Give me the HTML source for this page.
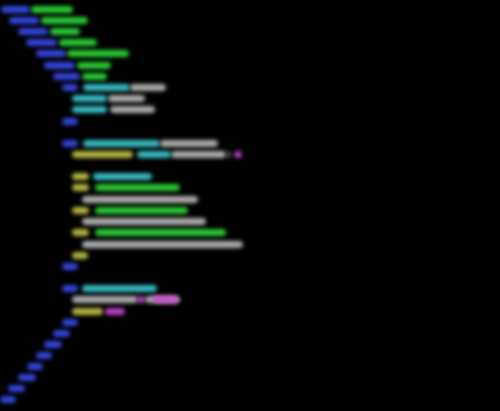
<!DOCTYPE html>
<html><head><style>
html,body{margin:0;padding:0;background:#000;width:500px;height:411px;overflow:hidden;position:relative}
i{position:absolute;height:7px;border-radius:4px;filter:blur(2.2px);display:block;opacity:.9}
.b{background:#3a4cf0}.g{background:#2ee03a}.c{background:#3ccfd6}.w{background:#c0c0c0}.y{background:#c9c94a}.m{background:#d048d8}.d{background:#555}
</style></head><body>
<i class="b" style="left:1px;width:29px;top:6px"></i><i class="g" style="left:31px;width:42px;top:6px"></i>
<i class="b" style="left:9px;width:30px;top:17px"></i><i class="g" style="left:41px;width:47px;top:17px"></i>
<i class="b" style="left:18px;width:30px;top:28px"></i><i class="g" style="left:50px;width:30px;top:28px"></i>
<i class="b" style="left:26px;width:31px;top:39px"></i><i class="g" style="left:59px;width:38px;top:39px"></i>
<i class="b" style="left:36px;width:30px;top:50px"></i><i class="g" style="left:67px;width:62px;top:50px"></i>
<i class="b" style="left:44px;width:31px;top:62px"></i><i class="g" style="left:77px;width:34px;top:62px"></i>
<i class="b" style="left:53px;width:27px;top:73px"></i><i class="g" style="left:82px;width:25px;top:73px"></i>
<i class="b" style="left:62px;width:16px;top:84px"></i><i class="c" style="left:83px;width:47px;top:84px"></i><i class="w" style="left:130px;width:36px;top:84px"></i>
<i class="c" style="left:72px;width:35px;top:95px"></i><i class="w" style="left:108px;width:37px;top:95px"></i>
<i class="c" style="left:72px;width:35px;top:106px"></i><i class="w" style="left:110px;width:45px;top:106px"></i>
<i class="b" style="left:62px;width:16px;top:118px"></i>
<i class="b" style="left:62px;width:16px;top:140px"></i><i class="c" style="left:83px;width:77px;top:140px"></i><i class="w" style="left:160px;width:58px;top:140px"></i>
<i class="y" style="left:72px;width:61px;top:151px"></i><i class="c" style="left:137px;width:34px;top:151px"></i><i class="w" style="left:171px;width:55px;top:151px"></i><i class="d" style="left:226px;width:5px;top:151px"></i><i class="m" style="left:234px;width:8px;top:151px"></i>
<i class="y" style="left:72px;width:17px;top:173px"></i><i class="c" style="left:93px;width:59px;top:173px"></i>
<i class="y" style="left:72px;width:17px;top:184px"></i><i class="g" style="left:95px;width:85px;top:184px"></i>
<i class="w" style="left:82px;width:116px;top:196px"></i>
<i class="y" style="left:72px;width:17px;top:207px"></i><i class="g" style="left:95px;width:93px;top:207px"></i>
<i class="w" style="left:82px;width:124px;top:218px"></i>
<i class="y" style="left:72px;width:17px;top:229px"></i><i class="g" style="left:95px;width:131px;top:229px"></i>
<i class="w" style="left:82px;width:161px;top:241px"></i>
<i class="y" style="left:72px;width:16px;top:252px"></i>
<i class="b" style="left:62px;width:16px;top:263px"></i>
<i class="b" style="left:62px;width:16px;top:285px"></i><i class="c" style="left:82px;width:75px;top:285px"></i>
<i class="w" style="left:72px;width:66px;top:296px"></i><i class="m" style="left:137px;width:8px;top:296px"></i><i class="w" style="left:145px;width:35px;top:296px"></i><i class="m" style="left:152px;width:26px;top:296px"></i>
<i class="y" style="left:72px;width:31px;top:308px"></i><i class="m" style="left:105px;width:20px;top:308px"></i>
<i class="b" style="left:62px;width:16px;top:319px"></i>
<i class="b" style="left:53px;width:17px;top:330px"></i>
<i class="b" style="left:44px;width:18px;top:341px"></i>
<i class="b" style="left:36px;width:16px;top:352px"></i>
<i class="b" style="left:27px;width:16px;top:363px"></i>
<i class="b" style="left:18px;width:18px;top:374px"></i>
<i class="b" style="left:8px;width:17px;top:385px"></i>
<i class="b" style="left:0px;width:16px;top:396px"></i>
</body></html>
